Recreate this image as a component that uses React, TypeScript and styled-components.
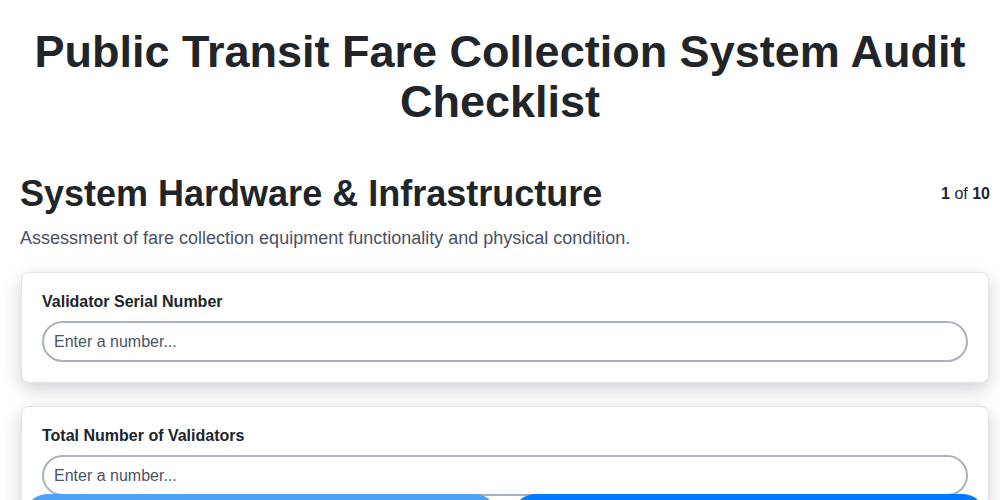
import React from 'react'
import styled, { createGlobalStyle } from 'styled-components'

const GlobalStyle = createGlobalStyle`
  * { box-sizing: border-box; }
  html, body { margin: 0; padding: 0; background: #ffffff; }
  body {
    font-family: "Liberation Sans", Arial, sans-serif;
    color: #212529;
  }
`

const Page = styled.main`
  padding: 27px 0 80px;
`

const Title = styled.h1`
  margin: 0 0 45px;
  text-align: center;
  font-size: 45px;
  line-height: 50px;
  font-weight: 700;
  color: #212529;
`

const Section = styled.div`
  padding: 0 10px 0 20px;
`

const SectionHeader = styled.div`
  display: flex;
  align-items: center;
  justify-content: space-between;
  margin-bottom: 11px;
`

const SectionTitle = styled.h2`
  margin: 0;
  font-size: 36px;
  line-height: 1.2;
  font-weight: 700;
  color: #212529;
`

const Progress = styled.span`
  font-size: 16px;
  color: #212529;

  b {
    font-weight: 700;
  }
`

const Description = styled.p`
  margin: 0 0 22px;
  font-size: 18px;
  line-height: 24px;
  color: #4a5160;
`

const QuestionList = styled.div`
  display: flex;
  flex-direction: column;
  gap: 23px;
`

const Card = styled.section`
  padding: 20px;
  margin: 0 1px;
  background: #ffffff;
  border: 1px solid #e4e4ea;
  border-radius: 8px;
  box-shadow: 0 6px 18px rgba(20, 20, 50, 0.2);
`

const Label = styled.label`
  display: block;
  margin-bottom: 10px;
  font-size: 16px;
  line-height: 18px;
  font-weight: 700;
  color: #212529;
`

const NumberInput = styled.input`
  display: block;
  width: 100%;
  height: 41px;
  padding: 0 10px;
  font-family: "Liberation Sans", Arial, sans-serif;
  font-size: 16px;
  color: #212529;
  background: #ffffff;
  border: 2px solid #aab3bc;
  border-radius: 21px;
  outline: none;

  &::placeholder {
    color: #4b5363;
    opacity: 1;
  }
`

const Footer = styled.nav`
  position: fixed;
  left: 0;
  right: 0;
  bottom: -42px;
  display: grid;
  grid-template-columns: 1fr 1fr;
  gap: 16px;
  padding: 0 15px 0 25px;
`

const NavButton = styled.button<{ $disabled?: boolean }>`
  height: 48px;
  border: none;
  border-radius: 22px;
  font-family: "Liberation Sans", Arial, sans-serif;
  font-size: 16px;
  font-weight: 700;
  color: #ffffff;
  background: ${({ $disabled }) => ($disabled ? '#4da2f7' : '#007bff')};
`

const questions = ['Validator Serial Number', 'Total Number of Validators']

export default function App() {
  return (
    <>
      <GlobalStyle />
      <Page>
        <Title>Public Transit Fare Collection System Audit Checklist</Title>
        <Section>
          <SectionHeader>
            <SectionTitle>System Hardware &amp; Infrastructure</SectionTitle>
            <Progress>
              <b>1</b> of <b>10</b>
            </Progress>
          </SectionHeader>
          <Description>Assessment of fare collection equipment functionality and physical condition.</Description>
          <QuestionList>
            {questions.map((q) => (
              <Card key={q}>
                <Label>{q}</Label>
                <NumberInput type="number" placeholder="Enter a number..." />
              </Card>
            ))}
          </QuestionList>
        </Section>
      </Page>
      <Footer>
        <NavButton $disabled>Previous</NavButton>
        <NavButton>Next</NavButton>
      </Footer>
    </>
  )
}
